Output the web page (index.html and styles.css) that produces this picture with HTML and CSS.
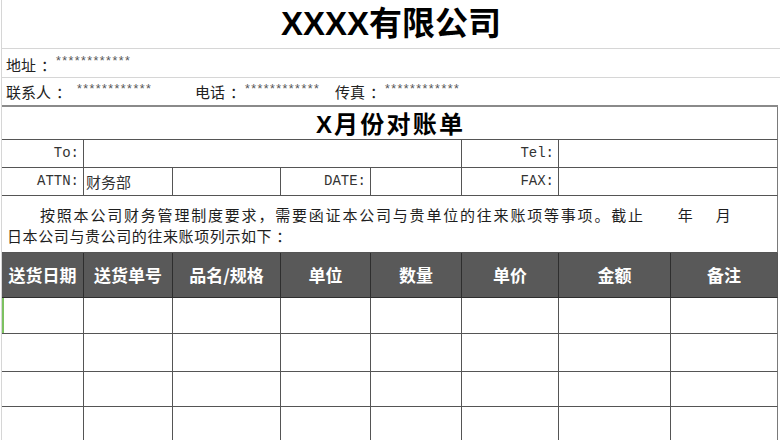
FILE: index.html
```html
<!DOCTYPE html>
<html lang="zh-CN">
<head>
<meta charset="utf-8">
<title>对账单</title>
<link rel="stylesheet" href="styles.css">
</head>
<body>
<div class="page">
  <div class="company">XXXX有限公司</div>
  <div class="info addr"><span class="lbl w50">地址<span class="colon">：</span></span><span class="stars">************</span></div>
  <div class="info contact"><span class="lbl w71">联系人<span class="colon">：</span></span><span class="stars w118">************</span><span class="lbl w50">电话<span class="colon">：</span></span><span class="stars w90">************</span><span class="lbl w50">传真<span class="colon">：</span></span><span class="stars">************</span></div>
  <div class="sheet">
    <div class="cell span8 doc-title">X月份对账单</div>

    <div class="cell mono">To:</div>
    <div class="cell span4"></div>
    <div class="cell mono">Tel:</div>
    <div class="cell span2 last"></div>

    <div class="cell mono">ATTN:</div>
    <div class="cell cn">财务部</div>
    <div class="cell"></div>
    <div class="cell mono">DATE:</div>
    <div class="cell"></div>
    <div class="cell mono">FAX:</div>
    <div class="cell span2 last"></div>

    <div class="cell span8 para">
      <div class="line1">按照本公司财务管理制度要求，需要函证本公司与贵单位的往来账项等事项。截止<span class="gap-y">年</span><span class="gap-m">月</span></div>
      <div class="line2">日本公司与贵公司的往来账项列示如下<span class="colon">：</span></div>
    </div>

    <div class="cell th">送货日期</div>
    <div class="cell th">送货单号</div>
    <div class="cell th">品名/规格</div>
    <div class="cell th">单位</div>
    <div class="cell th">数量</div>
    <div class="cell th">单价</div>
    <div class="cell th">金额</div>
    <div class="cell th last">备注</div>

    <div class="cell td selected"></div><div class="cell td"></div><div class="cell td"></div><div class="cell td"></div><div class="cell td"></div><div class="cell td"></div><div class="cell td"></div><div class="cell td last"></div>
    <div class="cell td"></div><div class="cell td"></div><div class="cell td"></div><div class="cell td"></div><div class="cell td"></div><div class="cell td"></div><div class="cell td"></div><div class="cell td last"></div>
    <div class="cell td"></div><div class="cell td"></div><div class="cell td"></div><div class="cell td"></div><div class="cell td"></div><div class="cell td"></div><div class="cell td"></div><div class="cell td last"></div>
    <div class="cell td"></div><div class="cell td"></div><div class="cell td"></div><div class="cell td"></div><div class="cell td"></div><div class="cell td"></div><div class="cell td"></div><div class="cell td last"></div>
  </div>
</div>
</body>
</html>
```

FILE: styles.css
```css
* { box-sizing: border-box; }

html, body {
  margin: 0;
  padding: 0;
  background: #ffffff;
  overflow: hidden;
}

body {
  font-family: "Noto Sans CJK SC", "Noto Sans", sans-serif;
  color: #1e1e1e;
  width: 780px;
  height: 440px;
}

.page {
  margin-left: 1px;
  border-left: 1px solid #d6d6d6;
  height: 440px;
}

.company {
  height: 49px;
  border-bottom: 1px solid #d6d6d6;
  font-family: "Liberation Sans", "Noto Sans CJK SC", sans-serif;
  font-weight: 700;
  font-size: 33px;
  line-height: 48px;
  text-align: center;
  color: #000;
}

.info {
  display: flex;
  align-items: center;
  padding-left: 4px;
  font-size: 15px;
  color: #222;
}

.colon {
  display: inline-block;
  padding-left: 5px;
}

.addr {
  height: 29px;
  border-bottom: 1px solid #d6d6d6;
  padding-top: 2px;
}

.contact {
  height: 27px;
}

.lbl { display: inline-block; white-space: nowrap; }

.stars {
  display: inline-block;
  font-family: "Liberation Sans", sans-serif;
  font-size: 12.5px;
  letter-spacing: 1.4px;
  color: #555;
  white-space: nowrap;
  position: relative;
  top: -3px;
}

.w50 { width: 50px; }
.w71 { width: 71px; }
.w90 { width: 90px; }
.w118 { width: 118px; }

.sheet {
  display: grid;
  grid-template-columns: 82px 89px 108px 90px 91px 97px 112px 107px;
  grid-template-rows: 33px 28px 28px 57px 45px 36px 38px 35px 36px;
  border-top: 2px solid #8a8a8a;
  width: 776px;
}

.cell {
  border-right: 1px solid #555;
  border-bottom: 1px solid #555;
  min-width: 0;
}

.cell.last { border-right-color: #7a7a7a; }

.span8 { grid-column: span 8; border-right-color: #7a7a7a; }
.span4 { grid-column: span 4; }
.span2 { grid-column: span 2; }

.doc-title {
  font-family: "Liberation Sans", "Noto Sans CJK SC", sans-serif;
  font-weight: 700;
  font-size: 24px;
  letter-spacing: 2.2px;
  line-height: 36px;
  text-align: center;
  color: #000;
  padding-left: 2px;
}

.mono {
  font-family: "Liberation Mono", monospace;
  font-size: 14px;
  text-align: right;
  padding-right: 4px;
  line-height: 27px;
  color: #333;
}

.cn {
  font-size: 15px;
  line-height: 27px;
  padding-left: 2px;
  color: #333;
}

.para {
  font-size: 15px;
  line-height: 21px;
  padding: 8px 0 0 5px;
  color: #1e1e1e;
  white-space: nowrap;
}

.para .colon { padding-left: 4px; }

.line1 {
  padding-left: 33px;
  letter-spacing: 1.8px;
}

.gap-y { margin-left: 33px; }
.gap-m { margin-left: 21px; }

.line2 {
  letter-spacing: 0.6px;
}

.th {
  background: #595959;
  color: #ffffff;
  font-weight: 700;
  font-size: 17px;
  text-align: center;
  line-height: 44px;
  border-right-color: #2e2e2e;
  border-bottom-color: #2e2e2e;
}

.th.last { border-right-color: #555; }

.td { background: #fff; }

.selected {
  box-shadow: inset 2px 0 0 #7cc160;
}
```
